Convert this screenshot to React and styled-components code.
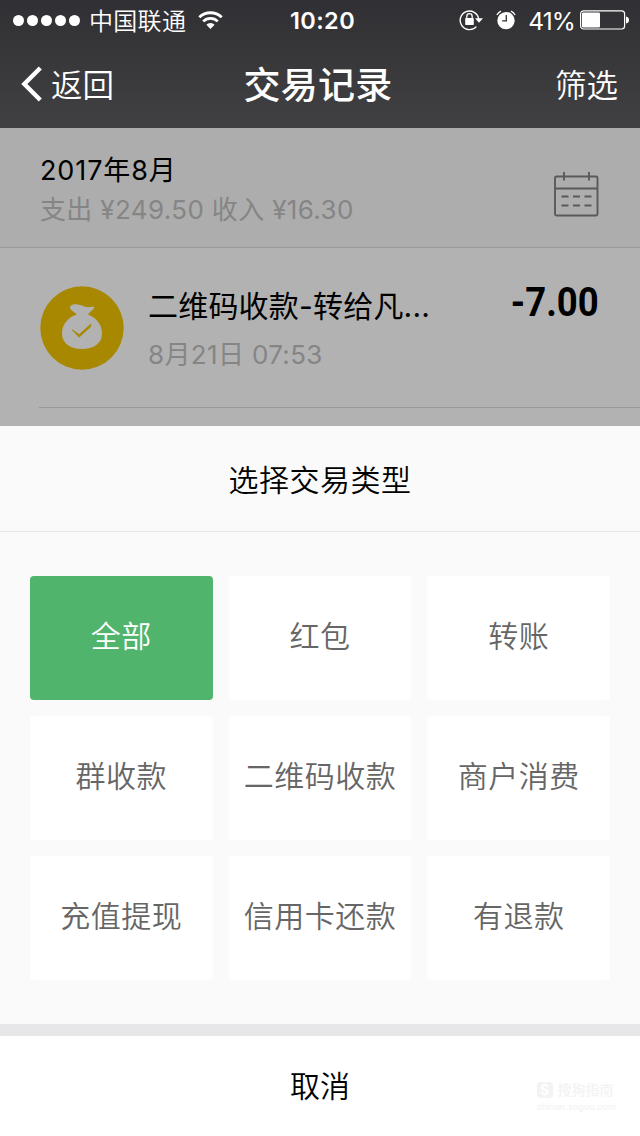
import React from "react"
import styled, { createGlobalStyle } from "styled-components"

const GlobalStyle = createGlobalStyle`
  * {
    box-sizing: border-box;
  }

  body {
    margin: 0;
    background: #fff;
    font-family: Inter, "Noto Sans CJK SC", sans-serif;
  }
`

const Screen = styled.div`
  display: flex;
  flex-direction: column;
  width: 640px;
  height: 1136px;
  overflow: hidden;
  white-space: nowrap;
`

const Header = styled.header`
  height: 128px;
  color: #fff;
  background: linear-gradient(#302f33, #414143);
`

const StatusBar = styled.div`
  display: grid;
  grid-template-columns: 1fr auto 1fr;
  align-items: center;
  height: 40px;
  padding: 0 11px 0 13px;
`

const StatusGroup = styled.div`
  display: flex;
  align-items: center;
  justify-content: ${({ $end }) => ($end ? "flex-end" : "flex-start")};
`

const Signal = styled.div`
  display: flex;
  gap: 3px;
  margin-right: 9px;
`

const Dot = styled.i`
  width: 11px;
  height: 11px;
  border-radius: 50%;
  background: #fff;
`

const Carrier = styled.span`
  margin-right: 12px;
  padding-top: 4px;
  font-size: 24px;
  font-weight: 350;
  line-height: 36px;
  letter-spacing: 0.3px;
`

const Clock = styled.span`
  padding: 2px 0 0 3px;
  font-size: 23.5px;
  font-weight: 600;
  line-height: 38px;
  letter-spacing: 0.4px;
`

const Percent = styled.span`
  margin: 0 5px 0 12px;
  padding-top: 2px;
  font-size: 24.5px;
  font-weight: 380;
  line-height: 38px;
  letter-spacing: -0.9px;
`

const NavBar = styled.nav`
  display: grid;
  grid-template-columns: 1fr auto 1fr;
  align-items: center;
  height: 88px;
  padding: 0 22px 0 21px;
`

const NavLink = styled.span`
  display: flex;
  align-items: center;
  justify-content: ${({ $end }) => ($end ? "flex-end" : "flex-start")};
  gap: 8px;
  font-size: 31.5px;
  font-weight: 350;
`

const NavText = styled.span`
  padding-top: 4px;
  line-height: 84px;
`

const Title = styled.h1`
  margin: 0;
  padding: 4px 3px 0 0;
  font-size: 37px;
  font-weight: 500;
  line-height: 82px;
  letter-spacing: 0.3px;
`

const Records = styled.main`
  height: 298px;
  background: #b2b2b2;
`

const Month = styled.section`
  display: flex;
  justify-content: space-between;
  height: 120px;
  padding: 22px 41px 0 40px;
  border-bottom: 1px solid #999;
  background: #adadad;

  svg {
    margin-top: 21px;
  }
`

const MonthName = styled.div`
  font-size: 27px;
  font-weight: 399;
  line-height: 41px;
  letter-spacing: 0.9px;
  color: #000;
`

const Muted = styled.div`
  font-size: 26px;
  font-weight: 399;
  line-height: 38px;
  letter-spacing: 0.35px;
  color: #858585;
`

const Record = styled.section`
  display: flex;
  height: 160px;
  margin-left: 39px;
  padding: 38px 41px 0 1px;
  border-bottom: 1px solid #999;
`

const RecordInfo = styled.div`
  flex: 1;
  margin-left: 24px;
`

const RecordName = styled.div`
  height: 50px;
  font-size: 30px;
  font-weight: 399;
  line-height: 40px;
  letter-spacing: 0.2px;
  color: #000;
`

const Amount = styled.div`
  font-family: Roboto, sans-serif;
  font-size: 41px;
  font-weight: 700;
  line-height: 33px;
  color: #000;
  transform: scaleX(0.89);
  transform-origin: right;
`

const Sheet = styled.section`
  display: flex;
  flex: 1;
  flex-direction: column;
  background: #fafafa;
`

const SheetTitle = styled.h2`
  height: 106px;
  margin: 0;
  border-bottom: 1px solid #e5e5e5;
  font-size: 30px;
  font-weight: 350;
  line-height: 108px;
  letter-spacing: 0.5px;
  text-align: center;
  color: #000;
`

const Types = styled.div`
  display: grid;
  grid-template-columns: repeat(3, 1fr);
  grid-auto-rows: 124px;
  gap: 16px;
  height: 492px;
  padding: 44px 30px;
`

const TypeButton = styled.button`
  padding: 0 0 9px;
  border: 0;
  border-radius: 4px;
  background: ${({ $active }) => ($active ? "#51b46d" : "#fff")};
  color: ${({ $active }) => ($active ? "#fff" : "#666")};
  font: inherit;
  font-size: 30px;
  font-weight: 350;
  letter-spacing: 0.5px;
`

const Cancel = styled.footer`
  display: grid;
  grid-template-columns: 1fr auto 1fr;
  height: 112px;
  border-top: 12px solid #e7e7e9;
  background: #fff;
  color: #000;
  font-size: 30px;
  font-weight: 350;
  line-height: 100px;
`

const Watermark = styled.div`
  grid-column: 3;
  justify-self: end;
  margin: 44px 24px 0 0;
  color: #f3f3f3;
  font-size: 14px;
  font-weight: 500;
  line-height: 20px;
`

const WatermarkBrand = styled.div`
  display: flex;
  align-items: center;
  gap: 5px;
`

const WatermarkMark = styled.b`
  width: 16px;
  height: 16px;
  border-radius: 4px;
  background: #f3f3f3;
  color: #fff;
  line-height: 16px;
  text-align: center;
`

const WatermarkUrl = styled.div`
  font-size: 9px;
  line-height: 14px;
`

const CancelLabel = styled.span`
  grid-column: 2;
`

function WifiIcon() {
  return (
    <svg width="25" height="19" viewBox="0 0 25 19" fill="none" stroke="#fff">
      <path d="M1.3 6.3a16 16 0 0 1 22.4 0" strokeWidth="2.8" />
      <path d="M5.2 10.4a10.4 10.4 0 0 1 14.6 0" strokeWidth="2.7" />
      <path d="M8.4 13.8a5.8 5.8 0 0 1 8.2 0L12.5 18z" fill="#fff" stroke="none" />
    </svg>
  )
}

function RotationLockIcon() {
  return (
    <svg width="25" height="22" viewBox="0 0 25 22" fill="none" stroke="#fff">
      <path d="M17.4 17.6A9.3 9.3 0 1 1 19.7 10" strokeWidth="1.4" />
      <path d="M16 9.3h8l-4 4.5z" fill="#fff" stroke="none" />
      <rect x="6.2" y="9" width="8.6" height="7" rx=".7" fill="#fff" stroke="none" />
      <path d="M7.8 9.5V7.4a2.7 2.7 0 0 1 5.4 0v2.1" strokeWidth="1.3" />
    </svg>
  )
}

const AlarmSvg = styled.svg`
  margin-left: 12px;
`

function AlarmIcon() {
  return (
    <AlarmSvg width="20" height="20" viewBox="0 0 20 20" fill="none">
      <circle cx="10" cy="10.6" r="8.7" fill="#fff" />
      <path d="M.9 5A8.5 8.5 0 0 1 5 1.2M19.1 5A8.5 8.5 0 0 0 15 1.2" stroke="#fff" strokeWidth="1.3" />
      <path d="M10.3 5v5.8H6.2" stroke="#333236" strokeWidth="1.3" />
    </AlarmSvg>
  )
}

function BatteryIcon() {
  return (
    <svg width="49" height="20" viewBox="0 0 49 20">
      <rect x=".6" y=".8" width="44" height="18.2" rx="3" fill="none" stroke="#fff" strokeWidth="1.2" />
      <rect x="2" y="2.5" width="18" height="15" rx="1.2" fill="#fff" />
      <path d="M46 6.5q3 .5 3 3.5t-3 3.5z" fill="#fff" />
    </svg>
  )
}

function BackIcon() {
  return (
    <svg width="22" height="38" viewBox="0 0 22 38" fill="none">
      <path d="M19.3 3 3.3 19l16 16" stroke="#fff" strokeWidth="4.4" />
    </svg>
  )
}

function CalendarIcon() {
  return (
    <svg width="45" height="46" viewBox="0 0 45 46" fill="none" stroke="#5a5a5a">
      <rect x="1" y="5.5" width="42.5" height="39" rx="1.5" strokeWidth="1.9" />
      <path d="M1 17.5h42.5M10 1v8.5M35 1v8.5" strokeWidth="1.9" />
      <path d="M7.5 25.5h7M19 25.5h7M30.5 25.5h7M7.5 34.5h7M19 34.5h7M30.5 34.5h7" strokeWidth="1.8" />
    </svg>
  )
}

function MoneyBagIcon() {
  return (
    <svg width="84" height="84" viewBox="0 0 84 84">
      <circle cx="42" cy="42" r="41.7" fill="#a88800" />
      <path
        d="M36.6 28.5C34.2 25.5 30.2 24.7 30.1 21.6c0-3 3.9-3.8 7.2-3.2 4.4.2 6.6 2.4 9.5 2.7 3.5.4 8-1.3 7.4.6-.8 2.4-4.9 4.3-6.2 6.8C57 32 62 39.3 62 47.2 62 57.7 53.5 63 42 63s-20-5.3-20-15.8C22 39.3 27.5 31.5 36.6 28.5z"
        fill="#b2b2b2"
      />
      <path d="M32 43.6l7.2 4.9L50.8 38v2.6L39 51.3z" fill="#a88800" stroke="#a88800" strokeWidth=".7" />
    </svg>
  )
}

const types = [
  "全部",
  "红包",
  "转账",
  "群收款",
  "二维码收款",
  "商户消费",
  "充值提现",
  "信用卡还款",
  "有退款",
]

export default function App() {
  return (
    <Screen>
      <GlobalStyle />
      <Header>
        <StatusBar>
          <StatusGroup>
            <Signal>
              {[0, 1, 2, 3, 4].map((i) => (
                <Dot key={i} />
              ))}
            </Signal>
            <Carrier>中国联通</Carrier>
            <WifiIcon />
          </StatusGroup>
          <Clock>10:20</Clock>
          <StatusGroup $end>
            <RotationLockIcon />
            <AlarmIcon />
            <Percent>41%</Percent>
            <BatteryIcon />
          </StatusGroup>
        </StatusBar>
        <NavBar>
          <NavLink>
            <BackIcon />
            <NavText>返回</NavText>
          </NavLink>
          <Title>交易记录</Title>
          <NavLink $end>
            <NavText>筛选</NavText>
          </NavLink>
        </NavBar>
      </Header>
      <Records>
        <Month>
          <div>
            <MonthName>2017年8月</MonthName>
            <Muted>支出 ¥249.50 收入 ¥16.30</Muted>
          </div>
          <CalendarIcon />
        </Month>
        <Record>
          <MoneyBagIcon />
          <RecordInfo>
            <RecordName>二维码收款-转给凡...</RecordName>
            <Muted>8月21日 07:53</Muted>
          </RecordInfo>
          <Amount>-7.00</Amount>
        </Record>
      </Records>
      <Sheet>
        <SheetTitle>选择交易类型</SheetTitle>
        <Types>
          {types.map((name, i) => (
            <TypeButton key={name} $active={i === 0}>
              {name}
            </TypeButton>
          ))}
        </Types>
        <Cancel>
          <CancelLabel>取消</CancelLabel>
          <Watermark>
            <WatermarkBrand>
              <WatermarkMark>S</WatermarkMark>
              搜狗指南
            </WatermarkBrand>
            <WatermarkUrl>zhinan.sogou.com</WatermarkUrl>
          </Watermark>
        </Cancel>
      </Sheet>
    </Screen>
  )
}
